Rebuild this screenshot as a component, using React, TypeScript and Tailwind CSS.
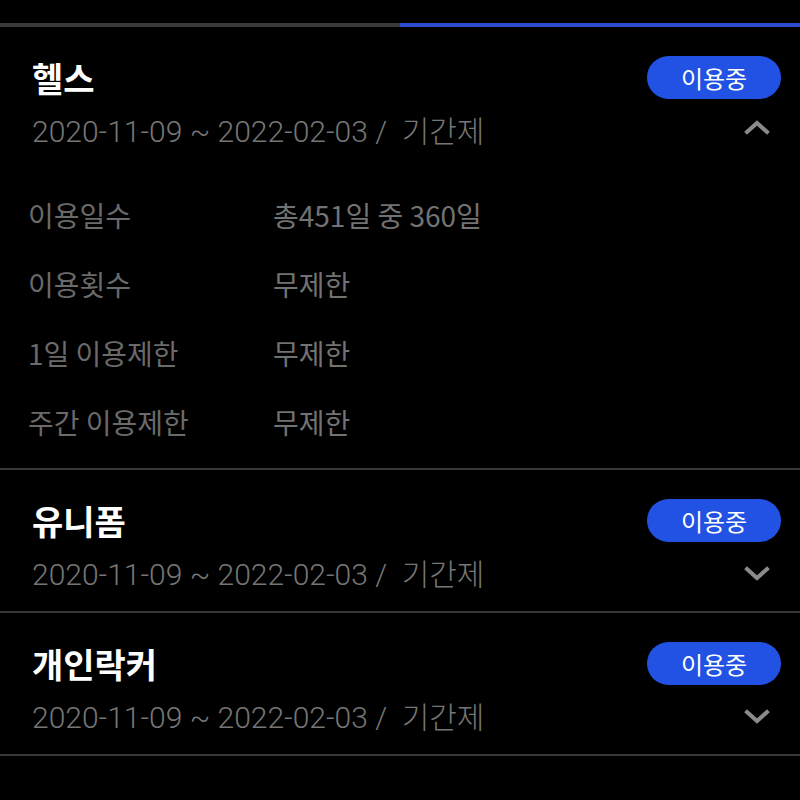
import React from "react";

type Pass = {
  name: string;
  period: string;
  open?: boolean;
  details?: { label: string; value: string }[];
};

const passes: Pass[] = [
  {
    name: "헬스",
    period: "2020-11-09 ~ 2022-02-03 /  기간제",
    open: true,
    details: [
      { label: "이용일수", value: "총451일 중 360일" },
      { label: "이용횟수", value: "무제한" },
      { label: "1일 이용제한", value: "무제한" },
      { label: "주간 이용제한", value: "무제한" },
    ],
  },
  { name: "유니폼", period: "2020-11-09 ~ 2022-02-03 /  기간제" },
  { name: "개인락커", period: "2020-11-09 ~ 2022-02-03 /  기간제" },
];

const Chevron = ({ up }: { up?: boolean }) => (
  <svg width="26" height="16" viewBox="0 0 26 16" className={up ? "-mt-[10px]" : "-mt-[2px]"}>
    <path
      d={up ? "M3 13 L13 4 L23 13" : "M3 3 L13 12 L23 3"}
      fill="none"
      stroke="#8a8a8a"
      strokeWidth="4"
      strokeLinecap="square"
    />
  </svg>
);

const PassItem = ({ pass }: { pass: Pass }) => (
  <div className="border-b-2 border-[#383838]">
    <div className="flex items-center justify-between pl-8 pr-[19px] pt-[29px]">
      <span className="text-[34px] font-bold leading-[43px] text-white">{pass.name}</span>
      <span className="flex h-[43px] w-[134px] items-center justify-center rounded-full bg-[#2152e3] text-[24px] text-white">
        이용중
      </span>
    </div>
    <div className="flex items-center justify-between pl-8 pr-[30px] pt-[13px] pb-[16px]">
      <span
        className="whitespace-pre text-[30px] font-light leading-[40px] text-[#767676]"
        style={{ fontFamily: 'Roboto, "Noto Sans CJK KR", sans-serif' }}
      >
        {pass.period}
      </span>
      <Chevron up={pass.open} />
    </div>
    {pass.open && pass.details && (
      <div className="flex flex-col pl-7 pt-[12px] pb-[12px]">
        {pass.details.map((d) => (
          <div key={d.label} className="flex h-[69px] items-center text-[28px] text-[#6a6a6a]">
            <span className="w-[245px]">{d.label}</span>
            <span className="text-[#727272]">{d.value}</span>
          </div>
        ))}
      </div>
    )}
  </div>
);

export default function App() {
  return (
    <div
      className="min-h-[800px] w-[800px] bg-black pt-[23px]"
      style={{ fontFamily: '"Noto Sans CJK KR", "Noto Sans", sans-serif' }}
    >
      <div className="flex h-1">
        <div className="w-1/2 bg-[#3a3a3a]" />
        <div className="w-1/2 bg-[#2b4ccc]" />
      </div>
      {passes.map((p) => (
        <PassItem key={p.name} pass={p} />
      ))}
    </div>
  );
}
